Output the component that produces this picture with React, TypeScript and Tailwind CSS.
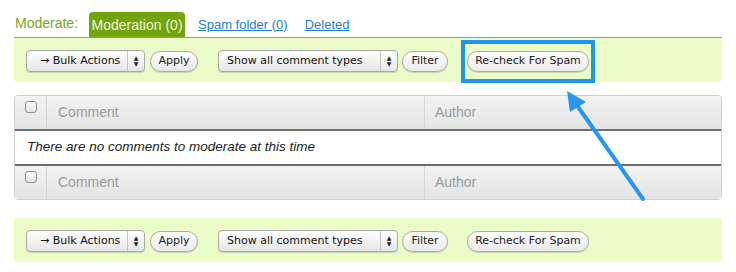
import React from 'react';

const ui = "font-['DejaVu_Sans',sans-serif]";
const helv = "font-['Liberation_Sans',Arial,sans-serif]";

function Select({ label, width, padLeft }: { label: string; width: string; padLeft: string }) {
  return (
    <div
      className={`${width} h-[22px] flex items-stretch rounded-[4px] border border-[#a8a8a8] bg-gradient-to-b from-white to-[#e6e6e6] shadow-[0_1px_1px_rgba(0,0,0,0.15)] text-[11px] text-[#111] ${ui}`}
    >
      <span className={`flex-1 flex items-center ${padLeft} whitespace-nowrap`}>{label}</span>
      <span className="w-[17px] border-l border-[#c4c4c4] flex flex-col items-center justify-center leading-none text-[6px] text-[#222]">
        <span>▲</span>
        <span>▼</span>
      </span>
    </div>
  );
}

function Pill({ label, width }: { label: string; width: string }) {
  return (
    <button
      className={`${width} h-[21px] rounded-full border border-[#a8a8a8] bg-gradient-to-b from-white to-[#e9e9e9] shadow-[0_1px_1px_rgba(0,0,0,0.15)] text-[11px] text-[#222] ${ui} flex items-center justify-center`}
    >
      {label}
    </button>
  );
}

function Toolbar({ highlight }: { highlight?: boolean }) {
  return (
    <div className="h-[44px] pt-[2px] bg-[#ebfcc8] rounded-b-[4px] flex items-center pl-[12px]">
      <Select label="→ Bulk Actions" width="w-[119px]" padLeft="pl-[13px]" />
      <div className="ml-[5px]">
        <Pill label="Apply" width="w-[48px]" />
      </div>
      <div className="ml-[20px]">
        <Select label="Show all comment types" width="w-[180px]" padLeft="pl-[8px]" />
      </div>
      <div className="ml-[4px]">
        <Pill label="Filter" width="w-[46px]" />
      </div>
      <div
        className={`ml-[13px] shrink-0 h-[43px] px-[2px] flex items-center border-4 ${
          highlight ? 'border-[#1f95ee]' : 'border-transparent'
        }`}
      >
        <Pill label="Re-check For Spam" width="w-[122px]" />
      </div>
    </div>
  );
}

function Checkbox() {
  return (
    <span className="block w-[12px] h-[12px] rounded-[3px] border border-[#8f8f8f] bg-gradient-to-b from-white to-[#e2e2e2]" />
  );
}

function HeadRow({ rounded }: { rounded: 'top' | 'bottom' }) {
  return (
    <div
      className={`h-[33px] flex bg-gradient-to-b from-[#f3f3f3] to-[#e4e4e4] text-[14px] text-[#9a9a9a] ${
        rounded === 'top' ? 'rounded-t-[4px]' : 'rounded-b-[4px]'
      }`}
    >
      <div className="w-[32px] border-r border-[#d6d6d6] flex justify-center pt-[5px]">
        <Checkbox />
      </div>
      <div className="w-[378px] border-r border-[#d6d6d6] flex items-center pl-[11px]">Comment</div>
      <div className="flex-1 flex items-center pl-[10px]">Author</div>
    </div>
  );
}

export default function App() {
  return (
    <div className={`relative w-[736px] h-[272px] bg-white overflow-hidden ${helv}`}>
      <div className="pt-[12px] px-[14px]">
        {/* tabs */}
        <div className="h-[25px] flex items-end">
          <span className="ml-[1px] mb-[3px] text-[14px] text-[#76a52a]">Moderate:</span>
          <span className="ml-[11px] h-[25px] w-[96px] pt-[1px] rounded-t-[4px] bg-[#72a40d] text-[14px] text-[#eef7dc] flex items-center justify-center">
            Moderation (0)
          </span>
          <a className="ml-[13px] mb-[3px] text-[13px] text-[#1a80c8] underline">Spam folder (0)</a>
          <a className="ml-[17px] mb-[3px] text-[13px] text-[#1a80c8] underline">Deleted</a>
        </div>
        <div className="border-t border-[#a3a342]">
          <Toolbar highlight />
        </div>

        {/* comments table */}
        <div className="mt-[13px] border border-[#cfcfcf] rounded-[4px]">
          <HeadRow rounded="top" />
          <div className="h-[37px] bg-white border-y-2 border-[#6e6e6e] flex items-center pl-[12px] italic text-[13.5px] text-[#222]">
            There are no comments to moderate at this time
          </div>
          <HeadRow rounded="bottom" />
        </div>

        <div className="mt-[18px]">
          <Toolbar />
        </div>
      </div>

      {/* annotation arrow */}
      <svg className="absolute inset-0 pointer-events-none" width="736" height="272" viewBox="0 0 736 272">
        <line x1="643" y1="199" x2="576" y2="104" stroke="#2b96ee" strokeWidth="4" strokeLinecap="round" />
        <polygon points="567,91 586,102 570,112" fill="#2b96ee" />
      </svg>
    </div>
  );
}
